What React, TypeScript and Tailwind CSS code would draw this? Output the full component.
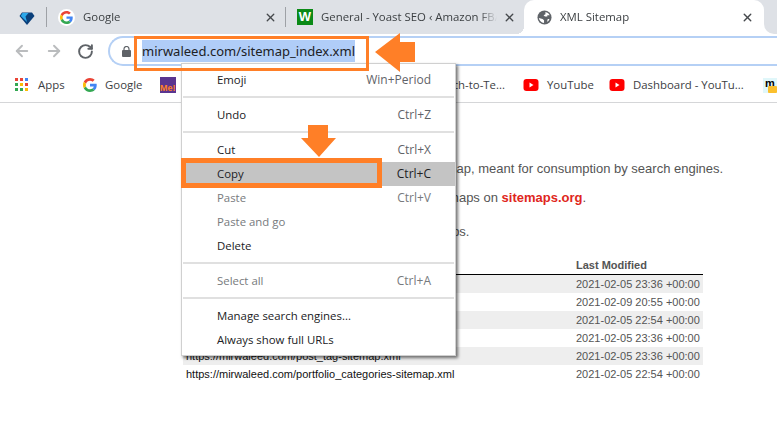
import {ArrowLeft, ArrowRight, RotateCw, X} from "lucide-react";

const UI_FONT = "font-['Open_Sans','Noto_Sans',sans-serif]"

function GoogleIcon({size = 16}: {size?: number}) {
    return (
        <svg width={size} height={size} viewBox="0 0 48 48" className="shrink-0">
            <path fill="#EA4335" d="M24 9.500c3.500 0 6.700 1.300 9.100 3.500l6.800-6.800C35.800 2.400 30.300 0 24 0 14.600 0 6.500 5.400 2.600 13.200l7.900 6.100C12.400 13.600 17.700 9.500 24 9.500z"/>
            <path fill="#4285F4" d="M47 24.500c0-1.600-.1-3.100-.4-4.500H24v9h12.900c-.6 3-2.200 5.400-4.700 7.100l7.600 5.900C44.300 37.800 47 31.700 47 24.500z"/>
            <path fill="#FBBC05" d="M10.500 28.700c-.5-1.500-.8-3-.8-4.700s.3-3.200.8-4.700l-7.900-6.100C.9 16.500 0 20.100 0 24s.9 7.500 2.600 10.800l7.900-6.100z"/>
            <path fill="#34A853" d="M24 48c6.500 0 11.900-2.100 15.800-5.800l-7.600-5.900c-2.100 1.400-4.900 2.300-8.200 2.300-6.300 0-11.600-4.100-13.500-9.800l-7.900 6.100C6.500 42.600 14.600 48 24 48z"/>
        </svg>
    )
}

function YoutubeIcon() {
    return (
        <svg width="16" height="16" viewBox="0 0 16 16" className="shrink-0">
            <rect x="0.5" y="2" width="15" height="12" rx="3" fill="#f00"/>
            <path d="M6.500 5.500v5l4-2.500z" fill="#fff"/>
        </svg>
    )
}

function GlobeIcon() {
    return (
        <svg width="15" height="15" viewBox="0 0 16 16" className="shrink-0">
            <circle cx="8" cy="8" r="7.500" fill="#5f6368"/>
            <path d="M2 8.500l4 1 1.500 1.500v2.800C4.500 13.500 2.300 11.300 2 8.500zM9 2.200c2 .3 3.700 1.600 4.500 3.300H11v1.500H8.500L7 5.500 9 4.500zM11.500 9.500h1.800c-.3 1.200-1 2.300-1.900 3.100l-.6-.6z" fill="#fff"/>
        </svg>
    )
}

function LockIcon() {
    return (
        <svg width="9" height="11" viewBox="0 0 9 11" className="shrink-0">
            <path d="M2 4.500V3a2.500 2.500 0 0 1 5 0v1.500" fill="none" stroke="#5f6368" strokeWidth="1.200"/>
            <rect y="4" width="9" height="7" rx="1" fill="#5f6368"/>
        </svg>
    )
}

function AppsIcon() {
    const colors = ["#ea4335", "#ea4335", "#4285f4", "#34a853", "#fbbc05", "#ea4335", "#34a853", "#34a853", "#fbbc05"]
    return (
        <div className="grid grid-cols-3 gap-[2px] w-[13px] h-[13px] shrink-0">
            {colors.map((color, i) => (
                <svg key={i} width="3" height="3" viewBox="0 0 3 3"><rect width="3" height="3" fill={color}/></svg>
            ))}
        </div>
    )
}

function Tab({icon, title, closeClass}: { icon: React.ReactNode, title: string, closeClass: string }) {
    return (
        <div className="flex items-center h-full">
            {icon}
            <span className="ml-2 w-[176px] text-[11.4px] text-[#3c4043] whitespace-nowrap overflow-hidden [mask-image:linear-gradient(to_right,black_90%,transparent)]">{title}</span>
            <X size={13} strokeWidth={2.5} className={`text-[#45484c] shrink-0 ${closeClass}`}/>
        </div>
    )
}

function TabStrip() {
    return (
        <div className="flex h-[34px] bg-[#dee1e6]">
            <div className="w-[46px] flex items-center justify-end pr-[11px] pt-[1px]">
                <svg width="16" height="16" viewBox="0 0 16 16">
                    <path d="M3 2.500h10l2.500 3.500L8 15 .5 6z" fill="#0a3f7a"/>
                    <path d="M3.500 3h6L6.500 6.500 8 12 1.800 6z" fill="#2aa7ea"/>
                </svg>
            </div>
            <div className="w-px h-[20px] mt-[7px] bg-[#9ea1a6]"/>
            <div className="w-[238px] pl-[11px]">
                <Tab
                    icon={<div className="flex items-center justify-center w-[17px] h-[17px] rounded-full bg-white shrink-0"><GoogleIcon size={13}/></div>}
                    title="Google"
                    closeClass="ml-[5px]"
                />
            </div>
            <div className="w-px h-[20px] mt-[7px] bg-[#9ea1a6]"/>
            <div className="w-[238px] pl-[11px]">
                <Tab
                    icon={<div className="w-4 h-4 bg-[#0b8a17] text-white text-[13px] leading-4 font-black text-center font-['Liberation_Sans',sans-serif] shrink-0">W</div>}
                    title="General - Yoast SEO ‹ Amazon FBA"
                    closeClass="ml-[6px]"
                />
            </div>
            <div className="relative w-[240px] bg-white rounded-t-[10px] pl-[13px]">
                <span className="absolute -left-2 bottom-0 w-2 h-2 bg-[radial-gradient(circle_at_0_0,transparent_8px,white_8px)]"/>
                <Tab icon={<GlobeIcon/>} title="XML Sitemap" closeClass="ml-[5px]"/>
            </div>
            <div className="flex-1 bg-white">
                <div className="w-full h-full bg-[#dee1e6] rounded-bl-[10px]"/>
            </div>
        </div>
    )
}

function Toolbar() {
    return (
        <div className="flex items-center h-[34px] bg-white">
            <div className="w-[108px] flex items-center pl-[13px] gap-[14px]">
                <ArrowLeft size={18} strokeWidth={2.5} className="text-[#babcbe]"/>
                <ArrowRight size={18} strokeWidth={2.5} className="text-[#babcbe]"/>
                <RotateCw size={17} strokeWidth={2.75} className="text-[#5f6368]"/>
            </div>
            <div className="flex-1 h-[30px] flex items-center border-2 border-r-0 border-[#b5d0f5] rounded-l-full pl-[12px]">
                <LockIcon/>
                <span className="ml-[11px] text-[13px] leading-[22px] bg-[#b0cdf8] text-[#202124] font-['Noto_Sans',sans-serif]">mirwaleed.com/sitemap_index.xml</span>
            </div>
        </div>
    )
}

function Bookmark({icon, label, className}: { icon: React.ReactNode, label: string, className: string }) {
    return (
        <div className={`flex items-center gap-2 shrink-0 ${className}`}>
            {icon}
            <span className="text-[11.4px] text-[#3c4043] whitespace-nowrap">{label}</span>
        </div>
    )
}

function BookmarksBar() {
    return (
        <div className="flex items-center h-[35px] pl-[15px] bg-white border-b border-[#d5d6d8] overflow-hidden">
            <Bookmark icon={<AppsIcon/>} label="Apps" className="w-[68px] gap-[10px]"/>
            <Bookmark icon={<GoogleIcon size={14}/>} label="Google" className="w-[77px]"/>
            <div className="w-4 h-4 bg-[#5a3590] text-[#ff7f27] text-[9px] leading-[22px] font-bold overflow-hidden font-['Liberation_Sans',sans-serif] shrink-0">Me!</div>
            <div className="w-[329px] shrink-0 text-[11.4px] text-right text-[#3c4043] whitespace-nowrap">Speech-to-Te...</div>
            <Bookmark icon={<YoutubeIcon/>} label="YouTube" className="ml-[18px] w-[86px]"/>
            <Bookmark icon={<YoutubeIcon/>} label="Dashboard - YouTu..." className="w-[154px]"/>
            <div className="w-[14px] h-[15px] bg-[#e0f7fa] relative shrink-0 text-[11px] leading-[11px] font-bold text-black font-['Liberation_Sans',sans-serif] text-center">
                m
                <span className="absolute right-0 bottom-0 w-[9px] h-[7px] bg-[#fbc02d] rounded-[1px]"/>
            </div>
        </div>
    )
}

const sitemapRows = [
    ["https://mirwaleed.com/post-sitemap.xml", "2021-02-05 23:36 +00:00"],
    ["https://mirwaleed.com/page-sitemap.xml", "2021-02-09 20:55 +00:00"],
    ["https://mirwaleed.com/portfolio-sitemap.xml", "2021-02-05 22:54 +00:00"],
    ["https://mirwaleed.com/category-sitemap.xml", "2021-02-05 23:36 +00:00"],
    ["https://mirwaleed.com/post_tag-sitemap.xml", "2021-02-05 23:36 +00:00"],
    ["https://mirwaleed.com/portfolio_categories-sitemap.xml", "2021-02-05 22:54 +00:00"],
]

function SitemapPage() {
    return (
        <main className="pl-[186px] pt-[57px] font-['Liberation_Sans',sans-serif] text-[13px] leading-[17px] text-[#545454]">
            <p className="whitespace-nowrap">
                Generated by Yoast SEO, this is an XML Sitemap, meant for consumption by search engines.
            </p>
            <p className="mt-[12px] whitespace-nowrap">
                You can find more information about XML sitemaps on <a className="font-bold text-[#e0261c]">sitemaps.org</a>.
            </p>
            <p className="mt-[17px] whitespace-nowrap">This XML Sitemap Index file contains 6 sitemaps.</p>
            <div className="-ml-[3px] mt-[17px] w-[520px] text-[11px]">
                <div className="flex h-[18px] items-center border-b border-black font-bold pb-[1px]">
                    <div className="w-[393px] pl-[3px]">Sitemap</div>
                    <div>Last Modified</div>
                </div>
                {sitemapRows.map(([url, date], i) => (
                    <div key={url} className={`flex h-[18px] items-center ${i % 2 === 0 ? "bg-[#eeeeee]" : "bg-white"}`}>
                        <div className="w-[393px] pl-[3px] text-[#111]">{url}</div>
                        <div>{date}</div>
                    </div>
                ))}
            </div>
        </main>
    )
}

function MenuItem({label, shortcut, disabled, active}: { label: string, shortcut?: string, disabled?: boolean, active?: boolean }) {
    return (
        <div className={`flex items-center justify-between h-6 pl-[35px] pr-[24px] text-[11.4px] ${disabled ? "text-[#777a7d]" : "text-[#202124]"} ${active ? "bg-[#c4c4c4]" : ""}`}>
            <span>{label}</span>
            {shortcut && <span className={`text-xs ${disabled || active ? "" : "text-[#5f6368]"}`}>{shortcut}</span>}
        </div>
    )
}

function MenuSeparator() {
    return <div className="mt-[4px] mb-[5px] mx-px h-[2px] bg-[#e0e0e0]"/>
}

function ContextMenu() {
    return (
        <div className={`absolute left-[181px] top-[63px] w-[275px] h-[293px] pt-[4px] bg-white border border-[#d0d0d0] shadow-[2px_2px_3px_rgba(0,0,0,0.55)] ${UI_FONT}`}>
            <MenuItem label="Emoji" shortcut="Win+Period"/>
            <MenuSeparator/>
            <MenuItem label="Undo" shortcut="Ctrl+Z"/>
            <MenuSeparator/>
            <MenuItem label="Cut" shortcut="Ctrl+X"/>
            <MenuItem label="Copy" shortcut="Ctrl+C" active/>
            <MenuItem label="Paste" shortcut="Ctrl+V" disabled/>
            <MenuItem label="Paste and go" disabled/>
            <MenuItem label="Delete"/>
            <MenuSeparator/>
            <MenuItem label="Select all" shortcut="Ctrl+A" disabled/>
            <MenuSeparator/>
            <MenuItem label="Manage search engines..."/>
            <MenuItem label="Always show full URLs"/>
        </div>
    )
}

function Annotations() {
    return (
        <>
            <div className="absolute left-[134px] top-[36px] w-[235px] h-[35px] border-[3px] border-[#ff7f27]"/>
            <svg className="absolute left-[375px] top-[33px]" width="41" height="40" viewBox="0 0 41 40">
                <path d="M0 19 25 0v9h15v20H25v10z" fill="#ff7f27"/>
            </svg>
            <div className="absolute left-[181px] top-[158px] w-[201px] h-[30px] border-[5px] border-[#ff7f27]"/>
            <svg className="absolute left-[301px] top-[125px]" width="35" height="33" viewBox="0 0 35 33">
                <path d="M7 0h20v13h8L18 32 0 13h7z" fill="#ff7f27"/>
            </svg>
        </>
    )
}

export default function App() {
    return (
        <div className="relative w-[777px] h-[425px] overflow-hidden bg-white">
            <header className={UI_FONT}>
                <TabStrip/>
                <Toolbar/>
                <BookmarksBar/>
            </header>
            <SitemapPage/>
            <ContextMenu/>
            <Annotations/>
        </div>
    )
}
